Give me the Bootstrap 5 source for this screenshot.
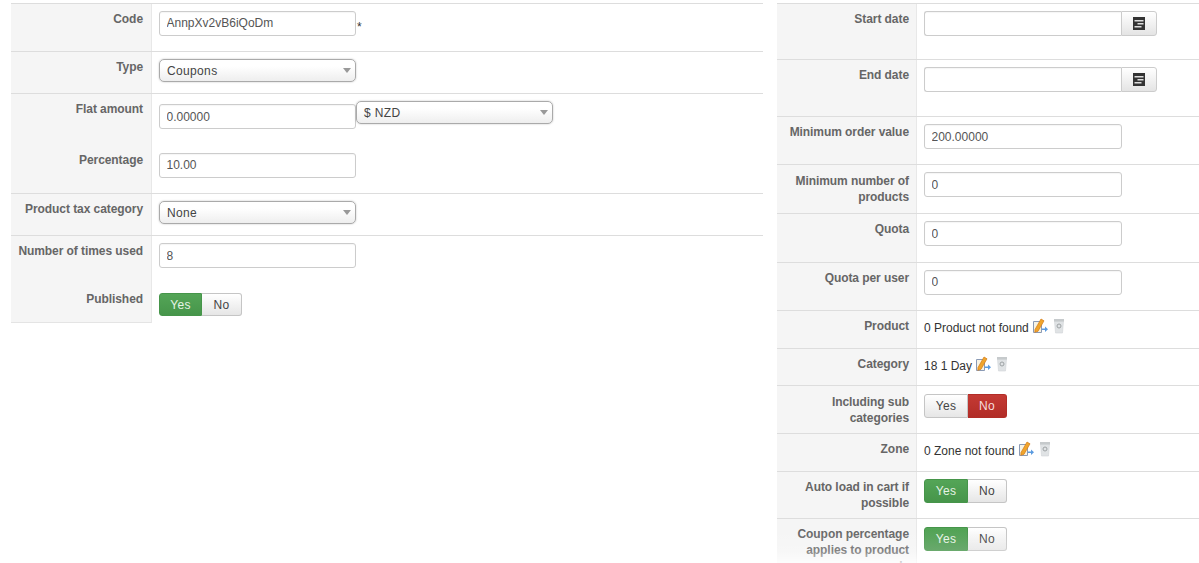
<!DOCTYPE html>
<html lang="en">
<head>
<meta charset="utf-8">
<title>Coupon form</title>
<link href="https://cdn.jsdelivr.net/npm/bootstrap@5.3.0/dist/css/bootstrap.min.css" rel="stylesheet">
<style>
html,body{height:563px;overflow:hidden;background:#fff}
body{font-family:"Liberation Sans",Arial,sans-serif;font-size:12px;line-height:16px;color:#333;padding-top:3px}
.sheet{gap:14px}
.pane-l{width:752px;margin-left:11px;flex:none}
.pane-r{flex:1 1 auto;min-width:0}
.line{border-top:1px solid #ddd;display:flex}
.line.flat{border-top:0}
.lab{flex:none;background:#f5f5f5;border-right:1px solid #e8e8e8;font-weight:700;color:#666;text-align:right;padding:7px 7px 0 5px;line-height:16px;letter-spacing:-.07px}
.pane-l .lab{width:141px;padding-right:8px}
.pane-r .lab{width:140px}
.lab.dn{padding-top:8px}
.lab.closing{border-bottom:1px solid #e4e4e4}
.val{flex:1 1 auto;padding:7px 0 0 7px;min-width:0}
.val.dn{padding-top:8px}
.val.dn2{padding-top:9px}
.h37{height:37px}.h38{height:38px}.h39{height:39px}.h42{height:42px}.h47{height:47px}.h48{height:48px}.h49{height:49px}.h52{height:52px}.h56{height:56px}.h57{height:57px}.h60{height:60px}
.txt{display:block;width:197px;height:25px;border:1px solid #ccc;border-radius:3px;background:#fff;color:#555;font-size:12px;padding:3px 7px 3px 6.5px;line-height:17px;box-shadow:inset 0 1px 1px rgba(0,0,0,.04)}
.pane-r .txt{width:198px}
.txt.up{padding-top:2px;padding-bottom:4px}
.txt.nudge{margin-top:3px}
.pick{display:flex;align-items:center;justify-content:space-between;width:197px;height:23px;border:1px solid #aaa;border-radius:5px;background:linear-gradient(#fff 30%,#eee);color:#444;font-size:12px;letter-spacing:.35px;padding:0 4px 0 7px;box-shadow:0 0 2px rgba(0,0,0,.25)}
.pick::after{content:"";border:4px solid transparent;border-top:5px solid #999;border-bottom:0}
.dategrp{display:flex;width:233px}
.pane-r .dategrp .txt{width:197px;border-radius:3px 0 0 3px;border-right:0}
.calbtn{width:36px;height:25px;border:1px solid #ccc;border-radius:0 3px 3px 0;background:linear-gradient(#fff,#e4e4e4);display:flex;align-items:center;justify-content:center;padding:0}
.tog{display:inline-flex;height:24px;vertical-align:top;letter-spacing:.3px}
.tog span{display:flex;align-items:center;justify-content:center;font-size:12px;height:24px;border:1px solid #c5c5c5;background:linear-gradient(#fff,#e6e6e6);color:#444}
.tog span:first-child{width:44px;border-radius:3px 0 0 3px}
.tog span:last-child{width:39px;border-radius:0 3px 3px 0;border-left:0}
.pane-l .tog span{height:23px}
.pane-l .tog span:first-child{width:43px}
.pane-l .tog span:last-child{width:40px}
.tog span.on-yes{background:linear-gradient(#54a557,#46954a);border-color:#46954a;color:#e6f3e6}
.tog span.on-no{background:linear-gradient(#c43a34,#b22d27);border-color:#b22d27;color:#f6dddd}
.req{margin:8px 0 0 1px;color:#333}
.icons{display:inline-flex;gap:5px;vertical-align:top;margin:-2px 0 0 3px}
.chk{padding-top:9px;color:#333}
.fade-b{position:absolute;left:777px;right:0;bottom:0;height:33px;background:linear-gradient(rgba(255,255,255,0),rgba(255,255,255,.2) 64%,rgba(255,255,255,.75));pointer-events:none}
</style>
</head>
<body>
<svg width="0" height="0" class="d-block position-absolute">
  <defs>
    <symbol id="ic-cal" viewBox="0 0 12 13">
      <rect x="0" y="0" width="12" height="13" fill="#333"/>
      <rect x="1.500" y="3" width="9" height="1.500" fill="#ddd"/>
      <rect x="4.500" y="6" width="6" height="1.500" fill="#ddd"/>
      <rect x="1.500" y="9" width="7" height="1.500" fill="#ddd"/>
    </symbol>
    <symbol id="ic-edit" viewBox="0 0 16 16">
      <path d="M1.500 3.500h8v11h-8z" fill="#f7f3e4" stroke="#8a9ab5"/>
      <path d="M3 11.500 9 1l3 1.800-6 10.500-3.200 1z" fill="#f0a52c" stroke="#d27a16" stroke-width=".7"/>
      <path d="M10 10.500h3V8.500l3 2.700-3 2.800v-2h-3z" fill="#5b9be0"/>
    </symbol>
    <symbol id="ic-trash" viewBox="0 0 12 16">
      <path d="M1.500 3h9l-1 12h-7z" fill="#e0e3e5" stroke="#d0d3d6" stroke-width=".6"/>
      <rect x="1" y="1" width="10" height="2.500" fill="#c6cacc"/>
      <circle cx="6" cy="8" r="2" fill="none" stroke="#9da2a4"/>
    </symbol>
  </defs>
</svg>
<div class="d-flex sheet">
  <div class="pane-l">
    <div class="line h48"><div class="lab">Code</div><div class="val d-flex"><input class="txt up" value="AnnpXv2vB6iQoDm"><span class="req">*</span></div></div>
    <div class="line h42"><div class="lab">Type</div><div class="val"><div class="pick">Coupons</div></div></div>
    <div class="line h52"><div class="lab">Flat amount</div><div class="val d-flex"><input class="txt nudge" value="0.00000"><div class="pick">$ NZD</div></div></div>
    <div class="line flat h48"><div class="lab">Percentage</div><div class="val dn"><input class="txt up" value="10.00"></div></div>
    <div class="line h42"><div class="lab">Product tax category</div><div class="val"><div class="pick">None</div></div></div>
    <div class="line h49"><div class="lab">Number of times used</div><div class="val"><input class="txt" value="8"></div></div>
    <div class="line flat h39"><div class="lab closing">Published</div><div class="val dn2"><div class="tog"><span class="on-yes">Yes</span><span>No</span></div></div></div>
  </div>
  <div class="pane-r">
    <div class="line h56"><div class="lab">Start date</div><div class="val"><div class="dategrp"><input class="txt"><button class="calbtn" type="button" aria-label="Calendar"><svg width="12" height="13"><use href="#ic-cal"/></svg></button></div></div></div>
    <div class="line h57"><div class="lab">End date</div><div class="val"><div class="dategrp"><input class="txt"><button class="calbtn" type="button" aria-label="Calendar"><svg width="12" height="13"><use href="#ic-cal"/></svg></button></div></div></div>
    <div class="line h48"><div class="lab">Minimum order value</div><div class="val"><input class="txt" value="200.00000"></div></div>
    <div class="line h49"><div class="lab dn">Minimum number of products</div><div class="val"><input class="txt" value="0"></div></div>
    <div class="line h49"><div class="lab">Quota</div><div class="val"><input class="txt" value="0"></div></div>
    <div class="line h48"><div class="lab">Quota per user</div><div class="val"><input class="txt up" value="0"></div></div>
    <div class="line h38"><div class="lab">Product</div><div class="val chk">0 Product not found<span class="icons"><svg width="16" height="16"><use href="#ic-edit"/></svg><svg width="12" height="16"><use href="#ic-trash"/></svg></span></div></div>
    <div class="line h37"><div class="lab">Category</div><div class="val chk">18 1 Day<span class="icons"><svg width="16" height="16"><use href="#ic-edit"/></svg><svg width="12" height="16"><use href="#ic-trash"/></svg></span></div></div>
    <div class="line h48"><div class="lab dn">Including sub categories</div><div class="val dn"><div class="tog"><span>Yes</span><span class="on-no">No</span></div></div></div>
    <div class="line h38"><div class="lab">Zone</div><div class="val chk">0 Zone not found<span class="icons"><svg width="16" height="16"><use href="#ic-edit"/></svg><svg width="12" height="16"><use href="#ic-trash"/></svg></span></div></div>
    <div class="line h47"><div class="lab">Auto load in cart if possible</div><div class="val"><div class="tog"><span class="on-yes">Yes</span><span>No</span></div></div></div>
    <div class="line h60"><div class="lab">Coupon percentage applies to product only</div><div class="val dn"><div class="tog"><span class="on-yes">Yes</span><span>No</span></div></div></div>
  </div>
</div>
<div class="fade-b"></div>
<script src="https://cdn.jsdelivr.net/npm/bootstrap@5.3.0/dist/js/bootstrap.bundle.min.js"></script>
</body>
</html>
